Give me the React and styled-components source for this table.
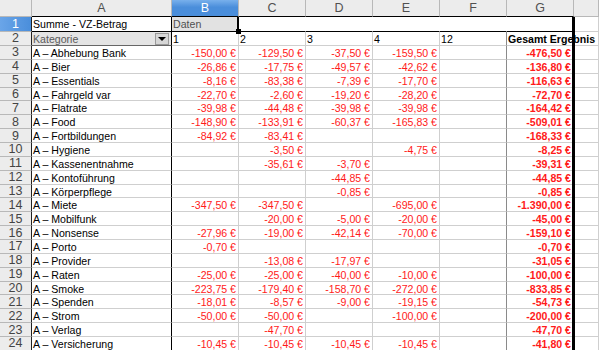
import React from 'react'
import styled, { createGlobalStyle } from 'styled-components'

const GRID = '#cfcfcf'
const HEAD_LINE = '#b8b8b8'

const GlobalStyle = createGlobalStyle`
  html, body { margin: 0; padding: 0; background: #fff; overflow: hidden; }
  body { font-family: "Liberation Sans", Arial, sans-serif; }
`

const columns = ['A', 'B', 'C', 'D', 'E', 'F', 'G', '']

const rows = [
    ['A – Abhebung Bank', '-150,00 €', '-129,50 €', '-37,50 €', '-159,50 €', '', '-476,50 €'],
    ['A – Bier', '-26,86 €', '-17,75 €', '-49,57 €', '-42,62 €', '', '-136,80 €'],
    ['A – Essentials', '-8,16 €', '-83,38 €', '-7,39 €', '-17,70 €', '', '-116,63 €'],
    ['A – Fahrgeld var', '-22,70 €', '-2,60 €', '-19,20 €', '-28,20 €', '', '-72,70 €'],
    ['A – Flatrate', '-39,98 €', '-44,48 €', '-39,98 €', '-39,98 €', '', '-164,42 €'],
    ['A – Food', '-148,90 €', '-133,91 €', '-60,37 €', '-165,83 €', '', '-509,01 €'],
    ['A – Fortbildungen', '-84,92 €', '-83,41 €', '', '', '', '-168,33 €'],
    ['A – Hygiene', '', '-3,50 €', '', '-4,75 €', '', '-8,25 €'],
    ['A – Kassenentnahme', '', '-35,61 €', '-3,70 €', '', '', '-39,31 €'],
    ['A – Kontoführung', '', '', '-44,85 €', '', '', '-44,85 €'],
    ['A – Körperpflege', '', '', '-0,85 €', '', '', '-0,85 €'],
    ['A – Miete', '-347,50 €', '-347,50 €', '', '-695,00 €', '', '-1.390,00 €'],
    ['A – Mobilfunk', '', '-20,00 €', '-5,00 €', '-20,00 €', '', '-45,00 €'],
    ['A – Nonsense', '-27,96 €', '-19,00 €', '-42,14 €', '-70,00 €', '', '-159,10 €'],
    ['A – Porto', '-0,70 €', '', '', '', '', '-0,70 €'],
    ['A – Provider', '', '-13,08 €', '-17,97 €', '', '', '-31,05 €'],
    ['A – Raten', '-25,00 €', '-25,00 €', '-40,00 €', '-10,00 €', '', '-100,00 €'],
    ['A – Smoke', '-223,75 €', '-179,40 €', '-158,70 €', '-272,00 €', '', '-833,85 €'],
    ['A – Spenden', '-18,01 €', '-8,57 €', '-9,00 €', '-19,15 €', '', '-54,73 €'],
    ['A – Strom', '-50,00 €', '-50,00 €', '', '-100,00 €', '', '-200,00 €'],
    ['A – Verlag', '', '-47,70 €', '', '', '', '-47,70 €'],
    ['A – Versicherung', '-10,45 €', '-10,45 €', '-10,45 €', '-10,45 €', '', '-41,80 €'],
]

const Sheet = styled.div`
    display: grid;
    grid-template-columns: 32px 140px repeat(6, 67px) 1fr;
    grid-template-rows: 17px 14.5px 14.5px;
    grid-auto-rows: 13.86px;
    width: 599px;
    height: 350px;
    overflow: hidden;
`

const ColHead = styled.div`
    box-sizing: border-box;
    display: flex;
    align-items: center;
    justify-content: center;
    font-size: 12.5px;
    color: ${p => p.$selected ? '#fff' : '#505050'};
    background: ${p => p.$selected ? 'linear-gradient(#78b0ec, #4a8edb 45%)' : '#ececec'};
    border-right: 1px solid ${HEAD_LINE};
    border-bottom: 1px solid ${p => p.$pivot ? '#000' : HEAD_LINE};
`

const RowHead = styled.div`
    box-sizing: border-box;
    display: flex;
    align-items: center;
    justify-content: center;
    font-size: 12.5px;
    color: ${p => p.$selected ? '#fff' : '#444'};
    background: ${p => p.$selected ? 'linear-gradient(90deg, #6aa5e8, #4a8edb)' : '#ececec'};
    border-right: 1px solid #222;
    border-bottom: 1px solid ${HEAD_LINE};
`

const Cell = styled.div`
    box-sizing: border-box;
    position: relative;
    display: flex;
    align-items: center;
    justify-content: ${p => p.$num ? 'flex-end' : 'flex-start'};
    padding: 1px 2px 0 1px;
    font-size: 10.6px;
    white-space: nowrap;
    color: ${p => p.$num ? '#ff1a1a' : '#000'};
    font-weight: ${p => p.$bold ? 700 : 400};
    border-right: 1px solid ${p => p.$right || GRID};
    border-bottom: 1px solid ${p => p.$bottom || GRID};

    ${p => p.$total && `
        &::after {
            content: '';
            position: absolute;
            top: 0;
            bottom: -1px;
            right: -2px;
            width: 3px;
            background: #000;
            z-index: 2;
        }
    `}
`

const FieldButton = styled(Cell)`
    background: #e4e4e4;
    color: #5a5a5a;
    border-bottom-color: #666;
`

const DataField = styled(Cell)`
    background: #e2e2e2;
    color: #505050;
    border-right: 2px solid #000;
    &::after {
        content: '';
        position: absolute;
        right: -4px;
        bottom: -3px;
        width: 5px;
        height: 5px;
        background: #000;
        z-index: 3;
    }
`

const DropButton = styled.span`
    position: absolute;
    right: 2px;
    top: 1px;
    width: 12px;
    height: 10px;
    background: #d6d6d6;
    border: 1px solid #9a9a9a;
    display: flex;
    align-items: center;
    justify-content: center;
    &::before {
        content: '';
        border-left: 4px solid transparent;
        border-right: 4px solid transparent;
        border-top: 4px solid #000;
    }
`

function App() {
    return (
        <Sheet>
            <GlobalStyle />
            <ColHead />
            {columns.map((c, i) => (
                <ColHead key={i} $selected={c === 'B'} $pivot={i < 7}>{c}</ColHead>
            ))}

            <RowHead $selected>1</RowHead>
            <Cell $right="#000" $bottom="#000">Summe - VZ-Betrag</Cell>
            <DataField $bottom="#000">Daten</DataField>
            <Cell $right="transparent" $bottom="#000" />
            <Cell $right="transparent" $bottom="#000" />
            <Cell $right="transparent" $bottom="#000" />
            <Cell $right="transparent" $bottom="#000" />
            <Cell $bottom="#000" $total />
            <Cell />

            <RowHead>2</RowHead>
            <FieldButton $right="#000">
                Kategorie
                <DropButton />
            </FieldButton>
            <Cell>1</Cell>
            <Cell>2</Cell>
            <Cell>3</Cell>
            <Cell>4</Cell>
            <Cell $right="#8a8a8a">12</Cell>
            <Cell $bold $total>Gesamt Ergebnis</Cell>
            <Cell />

            {rows.map((r, i) => (
                <React.Fragment key={i}>
                    <RowHead>{i + 3}</RowHead>
                    <Cell $right="#000">{r[0]}</Cell>
                    {r.slice(1, 6).map((v, j) => (
                        <Cell key={j} $num $right={j === 4 ? '#8a8a8a' : undefined}>{v}</Cell>
                    ))}
                    <Cell $num $bold $total>{r[6]}</Cell>
                    <Cell />
                </React.Fragment>
            ))}
        </Sheet>
    )
}

export default App
